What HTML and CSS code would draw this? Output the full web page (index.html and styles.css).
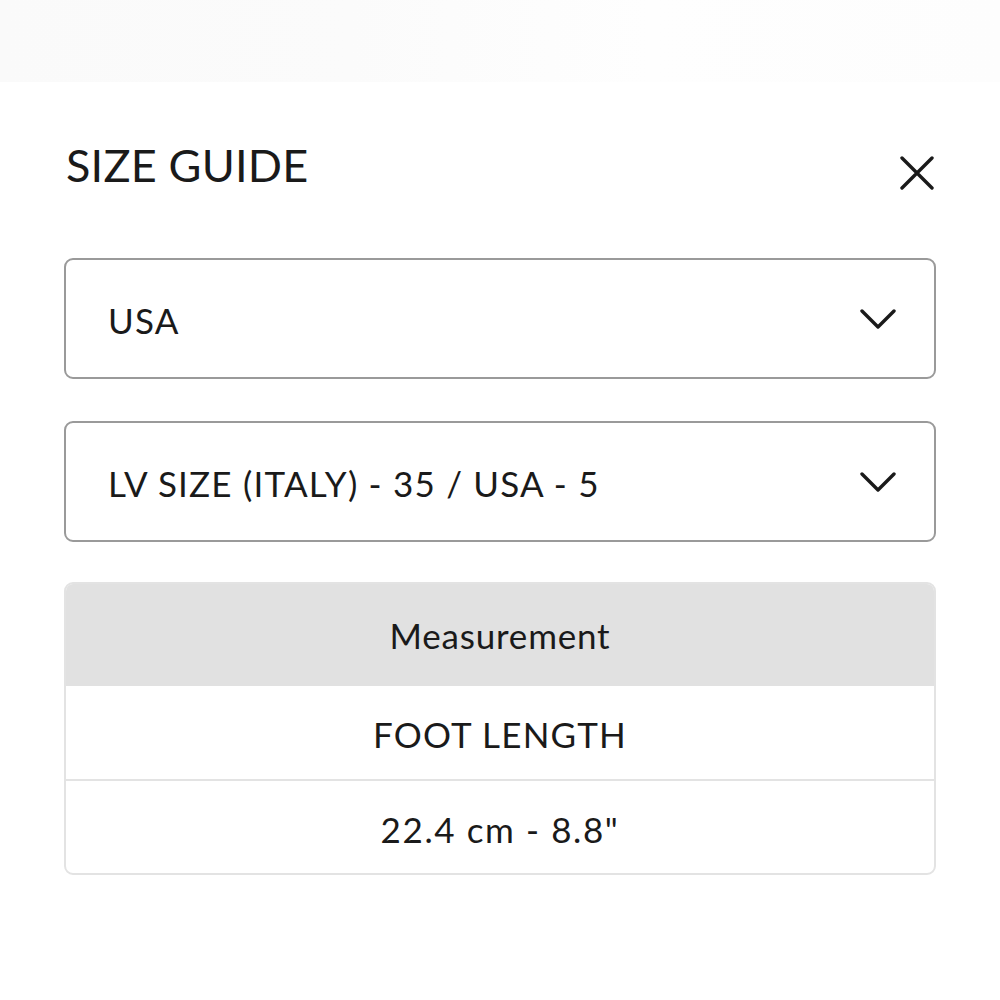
FILE: index.html
```html
<!DOCTYPE html>
<html>
<head>
<meta charset="utf-8">
<link rel="stylesheet" href="styles.css">
</head>
<body>
<div class="top-band"></div>
<main class="guide">
  <header class="guide-head">
    <h1 class="title">SIZE GUIDE</h1>
    <button class="close" aria-label="Close">
      <svg width="34" height="34" viewBox="0 0 34 34"><path d="M2 2 L32 32 M32 2 L2 32" stroke="#1a1a1a" stroke-width="3.4" fill="none" stroke-linecap="round"/></svg>
    </button>
  </header>
  <div class="select">
    <span class="select-text">USA</span>
    <svg class="chev" width="36" height="22" viewBox="0 0 36 22"><path d="M2 3 L18 19 L34 3" stroke="#1a1a1a" stroke-width="3.4" fill="none" stroke-linecap="round" stroke-linejoin="round"/></svg>
  </div>
  <div class="select">
    <span class="select-text">LV SIZE (ITALY) - 35 / USA - 5</span>
    <svg class="chev" width="36" height="22" viewBox="0 0 36 22"><path d="M2 3 L18 19 L34 3" stroke="#1a1a1a" stroke-width="3.4" fill="none" stroke-linecap="round" stroke-linejoin="round"/></svg>
  </div>
  <div class="table">
    <div class="thead">Measurement</div>
    <div class="row row-caps">FOOT LENGTH</div>
    <div class="row row-num">22.4 cm - 8.8"</div>
  </div>
</main>
</body>
</html>
```
FILE: styles.css
```css
html, body {
  margin: 0;
  padding: 0;
  background: #ffffff;
}
body {
  font-family: "Lato", "Noto Sans", sans-serif;
  color: #1a1a1a;
  width: 1000px;
  height: 1000px;
  overflow: hidden;
}
.top-band {
  height: 82px;
  background: linear-gradient(to right, #fafafa, #fbfbfb 35%, #fefefe 65%, #fdfdfd);
}
.guide {
  padding: 0 64px;
}
.guide-head {
  display: flex;
  justify-content: space-between;
  align-items: center;
  height: 176px;
}
.title {
  margin: 0;
  font-weight: 400;
  font-size: 45px;
  letter-spacing: 0.2px;
  margin-left: 2px;
  margin-top: -10px;
}
.close {
  background: none;
  border: 0;
  padding: 0;
  margin-right: 2px;
  margin-top: 6px;
  display: flex;
}
.select {
  box-sizing: border-box;
  height: 121px;
  border: 2px solid #9a9a9a;
  border-radius: 9px;
  display: flex;
  align-items: center;
  justify-content: space-between;
  padding: 0 38px 0 42px;
  margin-bottom: 42px;
}
.select-text {
  font-size: 35px;
  letter-spacing: 1.2px;
  padding-top: 2px;
}
.table {
  border: 2px solid #e3e3e3;
  border-radius: 9px;
  overflow: hidden;
  margin-top: -2px;
}
.thead {
  background: #e1e1e1;
  height: 102px;
  display: flex;
  align-items: center;
  justify-content: center;
  font-size: 35px;
  letter-spacing: 0.8px;
}
.row {
  display: flex;
  align-items: center;
  justify-content: center;
  font-size: 35px;
  padding-top: 3px;
}
.row-caps {
  height: 90px;
  letter-spacing: 1.2px;
}
.row-num {
  height: 89px;
  letter-spacing: 1.6px;
}
.row + .row {
  border-top: 2px solid #e3e3e3;
}
```
